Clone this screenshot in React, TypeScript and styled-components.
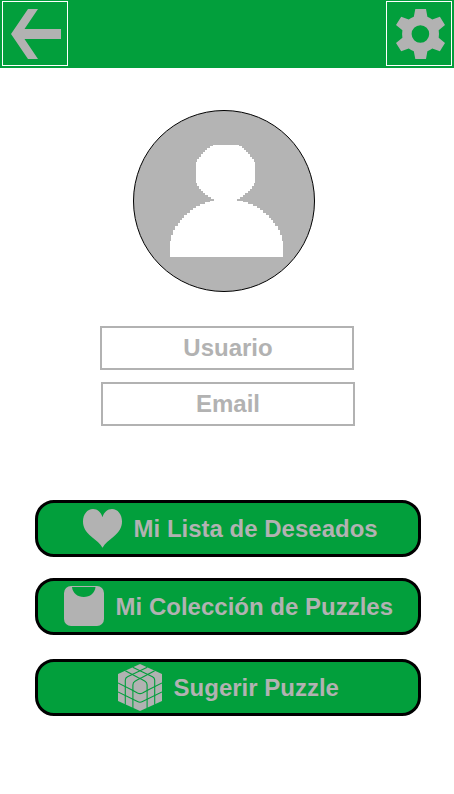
import React from "react";
import styled, { createGlobalStyle } from "styled-components";

const GREEN = "#029f3c";
const GREY = "#b2b2b2";

const GlobalStyle = createGlobalStyle`
  body {
    margin: 0;
    background: #fff;
    font-family: "Liberation Sans", Arial, sans-serif;
  }
  *, *::before, *::after { box-sizing: border-box; }
  button { font-family: inherit; }
`;

const Screen = styled.div`
  width: 454px;
  height: 794px;
  display: flex;
  flex-direction: column;
  overflow: hidden;
`;

const Header = styled.header`
  height: 68px;
  padding: 1px 2px;
  display: flex;
  justify-content: space-between;
  align-items: flex-start;
  background: ${GREEN};
`;

const HeaderButton = styled.button`
  width: 66px;
  height: 65px;
  padding: 7px 0 0;
  display: flex;
  justify-content: center;
  border: 1px solid #fff;
  background: transparent;

  svg { display: block; margin-left: 2px; }
`;

const Main = styled.main`
  display: flex;
  flex-direction: column;
`;

const Avatar = styled.div`
  width: 182px;
  height: 182px;
  margin: 42px 0 0 133px;
  padding: 34px 0 0 36px;
  border: 1px solid #000;
  border-radius: 50%;
  background: #b4b4b4;

  svg { display: block; }
`;

const Fields = styled.div`
  margin-top: 34px;
  display: flex;
  flex-direction: column;
  gap: 12px;
`;

const Field = styled.div<{ $left: number; $nudge: number }>`
  width: 254px;
  height: 44px;
  margin-left: ${({ $left }) => $left}px;
  padding-left: ${({ $nudge }) => $nudge}px;
  display: flex;
  align-items: center;
  justify-content: center;
  border: 2px solid ${GREY};
  color: ${GREY};
  font-size: 24px;
  line-height: 28px;
  font-weight: 700;
`;

const Actions = styled.nav`
  margin: 74px 0 0 35px;
  display: flex;
  flex-direction: column;
`;

const ActionButton = styled.button<{ $inset: number; $top: number }>`
  width: 386px;
  height: 57px;
  margin-top: ${({ $top }) => $top}px;
  padding: 0 0 0 ${({ $inset }) => $inset}px;
  display: flex;
  align-items: center;
  gap: 11.6px;
  border: 3px solid #000;
  border-radius: 19px;
  background: ${GREEN};
  color: ${GREY};
  font-size: 24px;
  line-height: 28px;
  font-weight: 700;
  white-space: nowrap;

  svg { display: block; flex: none; }
`;

const ArrowIcon = () => (
  <svg width="50" height="50" viewBox="0 0 50 50" fill={GREY}>
    <path d="M0 25L17 0H27L13.5 20H50V30H13.5L27 50H17Z" />
  </svg>
);

const GearIcon = () => (
  <svg width="50" height="50" viewBox="0 0 50 50" fill={GREY}>
    <path
      fillRule="evenodd"
      d="M20.3 0H31L32.4 7.8Q35 8.8 37.3 10.6L44.9 7.7L50 16L43.7 21.2Q44.3 25 43.7 28.8L50 34L44.9 42.3L37.3 39.4Q35 41.2 32.4 42.2L31 50H20.3L18.8 42.2Q16 41.2 13.7 39.4L6.2 42.3L1 34L7.4 28.8Q6.8 25 7.4 21.2L1 16L6.2 7.7L13.7 10.6Q16 8.8 18.8 7.8ZM25.4 16.2A8.8 8.8 0 1 0 25.4 33.8A8.8 8.8 0 1 0 25.4 16.2Z"
    />
  </svg>
);

const PersonIcon = () => (
  <svg width="113" height="112" viewBox="0 0 113 112" fill="#fff" shapeRendering="crispEdges">
    <path d="M43 0H69V1H72V3H74V5H76V7H78V9H80V12H82V14H84V17H85V38H84V41H82V44H80V46H78V48H75V50H73V52H70V54H67V56H73V57H78V59H83V61H87V63H90V65H93V68H96V70H99V73H101V75H103V78H105V81H108V85H110V90H112V96H113V112H0V96H1V90H3V85H5V81H8V78H10V75H12V73H14V70H17V68H20V65H23V63H26V61H30V59H35V57H40V56H44V54H41V52H38V50H35V48H33V46H31V44H29V41H27V38H26V17H27V14H29V12H31V9H33V7H35V5H37V3H40V1H43Z" />
  </svg>
);

const HeartIcon = () => (
  <svg width="39" height="39" viewBox="0 0 39 39" fill={GREY}>
    <path d="M19.5 38.7C17.3 34.5 13 31.5 8.5 27.8C3 23.2 0 18.5 0 12.5C0 5.5 4.2 0 10 0C14.5 0 18.1 3.2 19.5 8.3C20.9 3.2 24.5 0 29 0C34.8 0 39 5.5 39 12.5C39 18.5 36 23.2 30.5 27.8C26 31.5 21.7 34.5 19.5 38.7Z" />
  </svg>
);

const BagIcon = () => (
  <svg width="40" height="42" viewBox="0 0 40 42">
    <rect width="40" height="40" rx="7" fill={GREY} />
    <path d="M8 1H31.5C31 7 26 11 19.75 11S8.5 7 8 1Z" fill={GREEN} />
  </svg>
);

const CubeIcon = () => (
  <svg width="44" height="47" viewBox="0 0 44 47">
    <path d="M22 0L44 10V37L22 47L0 37V10Z" fill={GREY} />
    <g fill="none" stroke={GREEN} strokeWidth="1.1" strokeLinejoin="round">
      <path d="M29.3 3.3L9.5 12.8Q7.3 14 7.3 16V40.8M36.7 6.7L24 13.6Q22 14.6 20 15.6L17 17.2Q14.9 18.3 14.9 21V44" />
      <path d="M14.7 3.3L34.5 12.8Q36.7 14 36.7 16V40.8M7.3 6.7L20 13.6Q22 14.6 24 15.6L27 17.2Q29.1 18.3 29.1 21V44" />
      <path d="M0 19L14 26L19.5 29Q22 30.2 24.5 29L30 26L44 19M0 28L19.5 37.6Q22 38.8 24.5 37.6L44 28" />
    </g>
  </svg>
);

export default function App() {
  return (
    <>
      <GlobalStyle />
      <Screen>
        <Header>
          <HeaderButton aria-label="Volver"><ArrowIcon /></HeaderButton>
          <HeaderButton aria-label="Ajustes"><GearIcon /></HeaderButton>
        </Header>
        <Main>
          <Avatar><PersonIcon /></Avatar>
          <Fields>
            <Field $left={100} $nudge={2}>Usuario</Field>
            <Field $left={101} $nudge={0}>Email</Field>
          </Fields>
          <Actions>
            <ActionButton $top={0} $inset={45}>
              <HeartIcon />Mi Lista de Deseados
            </ActionButton>
            <ActionButton $top={21} $inset={26}>
              <BagIcon />Mi Colección de Puzzles
            </ActionButton>
            <ActionButton $top={24} $inset={80}>
              <CubeIcon />Sugerir Puzzle
            </ActionButton>
          </Actions>
        </Main>
      </Screen>
    </>
  );
}
